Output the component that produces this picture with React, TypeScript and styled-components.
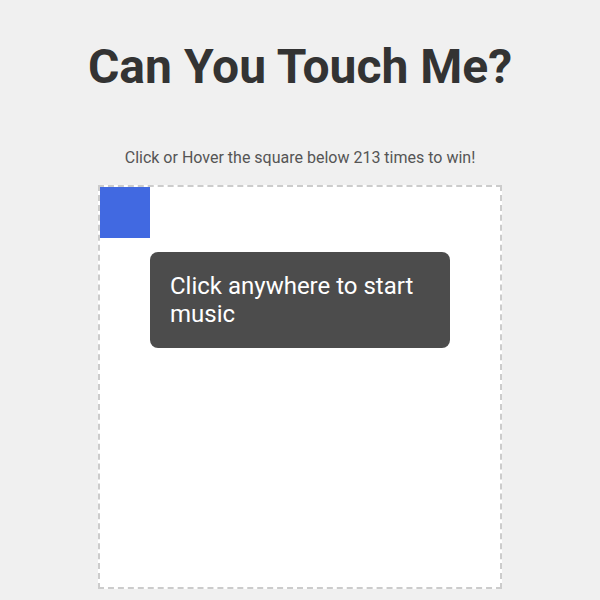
import React from "react";
import styled, { createGlobalStyle } from "styled-components";

const GlobalStyle = createGlobalStyle`
  html, body {
    margin: 0;
    padding: 0;
    background: #f0f0f0;
    font-family: Roboto, "Liberation Sans", Arial, sans-serif;
  }
`;

const Page = styled.main`
  display: flex;
  flex-direction: column;
  align-items: center;
  padding-top: 38px;
`;

const Title = styled.h1`
  margin: 0;
  font-size: 48px;
  font-weight: 700;
  color: #333333;
`;

const Subtitle = styled.p`
  margin: 53px 0 0;
  font-size: 16px;
  color: #555555;
`;

const Board = styled.div`
  position: relative;
  margin-top: 18px;
  width: 400px;
  height: 400px;
  background: #ffffff;
  border: 2px dashed #cccccc;
`;

const Target = styled.div`
  position: absolute;
  left: 0;
  top: 0;
  width: 50px;
  height: 51px;
  background: #4169e1;
`;

const Toast = styled.div`
  position: absolute;
  left: 50px;
  top: 65px;
  width: 300px;
  box-sizing: border-box;
  padding: 20px;
  border-radius: 8px;
  background: rgba(0, 0, 0, 0.7);
  color: #ffffff;
  font-size: 24px;
`;

export default function App() {
  return (
    <>
      <GlobalStyle />
      <Page>
        <Title>Can You Touch Me?</Title>
        <Subtitle>Click or Hover the square below 213 times to win!</Subtitle>
        <Board>
          <Target />
          <Toast>Click anywhere to start music</Toast>
        </Board>
      </Page>
    </>
  );
}
